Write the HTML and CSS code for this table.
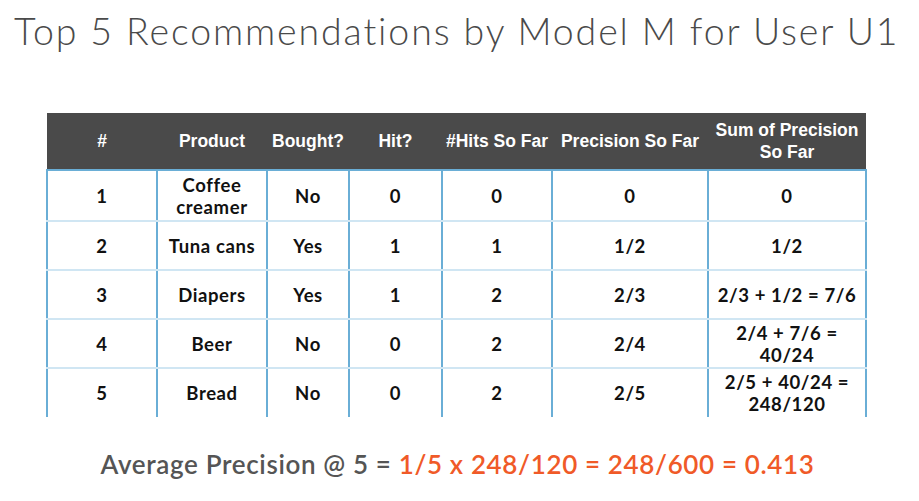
FILE: index.html
```html
<!DOCTYPE html>
<html>
<head>
<meta charset="utf-8">
<link rel="stylesheet" href="styles.css">
</head>
<body>
<div class="slide">
  <h1 class="title">Top 5 Recommendations by Model M for User U1</h1>
  <table class="grid">
    <colgroup>
      <col style="width:110px"><col style="width:110px"><col style="width:82px"><col style="width:93px"><col style="width:110px"><col style="width:156px"><col style="width:158px">
    </colgroup>
    <thead>
      <tr><th>#</th><th>Product</th><th>Bought?</th><th>Hit?</th><th>#Hits So Far</th><th>Precision So Far</th><th>Sum of Precision<br>So Far</th></tr>
    </thead>
    <tbody>
      <tr class="r1"><td>1</td><td>Coffee<br>creamer</td><td>No</td><td>0</td><td>0</td><td>0</td><td>0</td></tr>
      <tr><td>2</td><td>Tuna cans</td><td>Yes</td><td>1</td><td>1</td><td>1/2</td><td>1/2</td></tr>
      <tr><td>3</td><td>Diapers</td><td>Yes</td><td>1</td><td>2</td><td>2/3</td><td>2/3 + 1/2 = 7/6</td></tr>
      <tr><td>4</td><td>Beer</td><td>No</td><td>0</td><td>2</td><td>2/4</td><td>2/4 + 7/6 =<br>40/24</td></tr>
      <tr class="last"><td>5</td><td>Bread</td><td>No</td><td>0</td><td>2</td><td>2/5</td><td>2/5 + 40/24 =<br>248/120</td></tr>
    </tbody>
  </table>
  <p class="summary">Average Precision @ 5 = <span class="hl">1/5 x 248/120 = 248/600 = 0.413</span></p>
</div>
</body>
</html>
```
FILE: styles.css
```css
html, body { margin: 0; padding: 0; background: #fff; }
.slide { width: 919px; height: 501px; position: relative; overflow: hidden; }
.title {
  margin: 0;
  padding: 8px 0 0 14px;
  font-family: "Lato", "Open Sans", sans-serif;
  font-weight: 300;
  font-size: 37.5px;
  line-height: 46px;
  color: #4a4a4a;
  letter-spacing: 1.88px;
  white-space: nowrap;
}
.grid {
  margin: 59px 0 0 46px;
  border-collapse: collapse;
  table-layout: fixed;
  width: 819px;
}
.grid th {
  background: #4a4a4a;
  color: #fff;
  font-family: "Liberation Sans", Arial, sans-serif;
  font-weight: bold;
  font-size: 17.5px;
  line-height: 22px;
  height: 56px;
  padding: 0;
  text-align: center;
  white-space: nowrap;
  border-bottom: 2px solid #6aaed6;
}
.grid td {
  font-family: "Lato", "Open Sans", sans-serif;
  font-weight: 700;
  font-size: 18.5px;
  line-height: 22px;
  letter-spacing: 0.6px;
  color: #111;
  text-align: center;
  height: 47px;
  padding: 0;
  white-space: nowrap;
  border-left: 2px solid #6aaed6;
  border-right: 2px solid #6aaed6;
  border-bottom: 2px solid #d0e6f3;
}
.grid tr.r1 td { height: 49px; }
.grid tr.last td { border-bottom: none; height: 48px; }
.summary {
  margin: 31px 0 0 0;
  text-align: center;
  font-family: "Lato", "Open Sans", sans-serif;
  font-weight: 600;
  font-size: 26px;
  letter-spacing: 0.65px;
  color: #555;
  padding-right: 4px;
  white-space: nowrap;
}
.hl { color: #f05a28; }
```
